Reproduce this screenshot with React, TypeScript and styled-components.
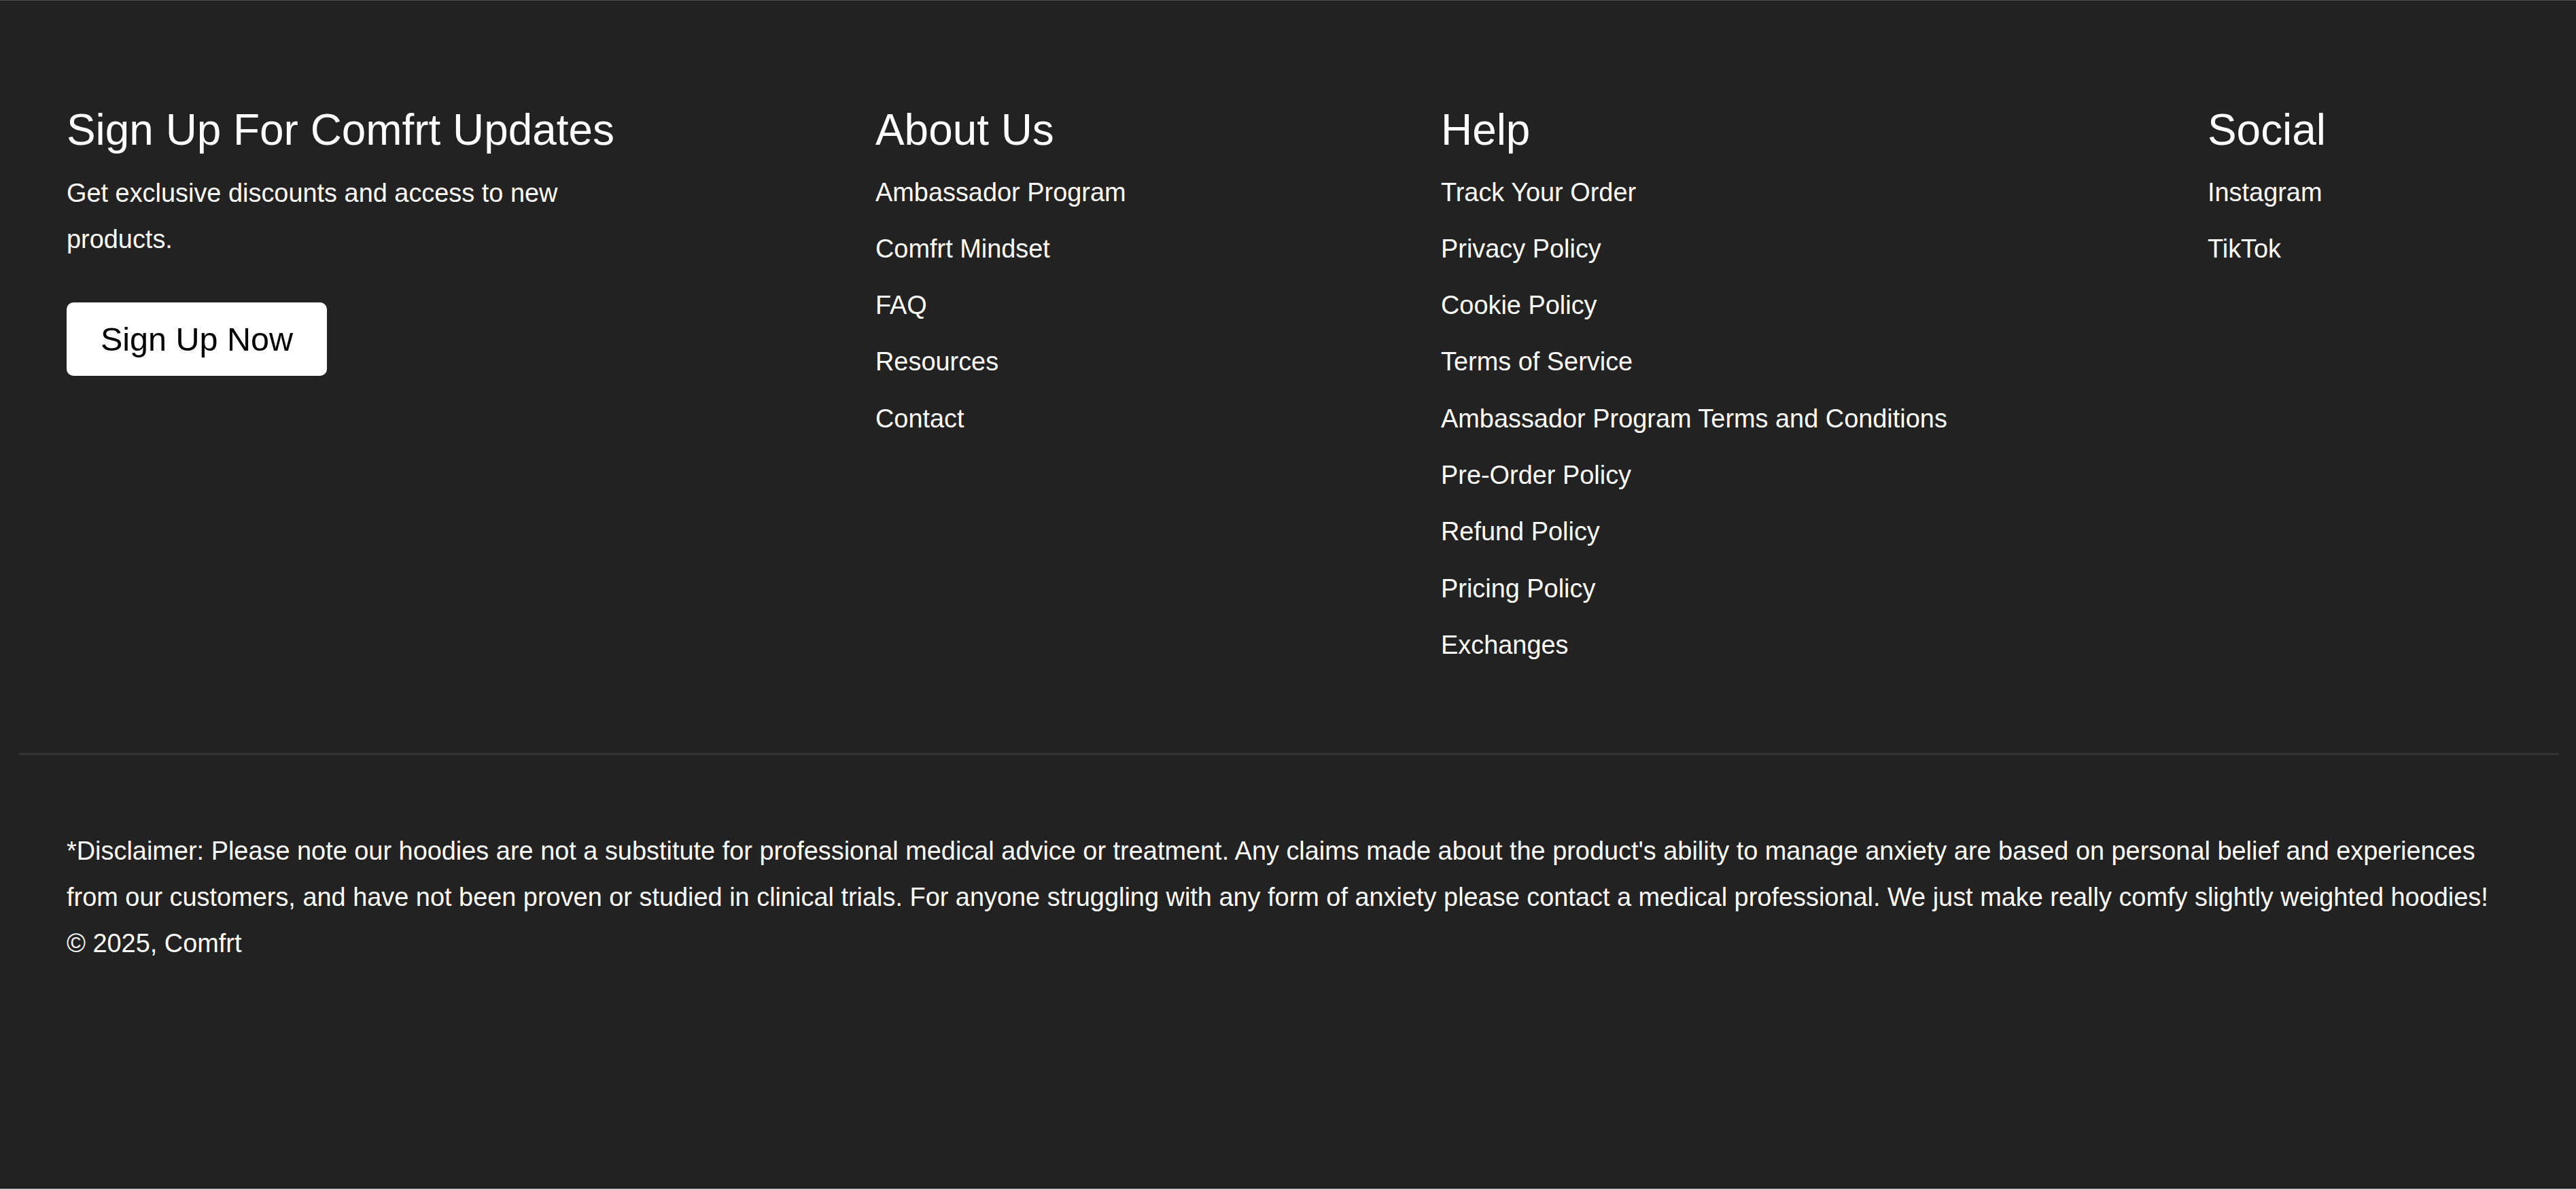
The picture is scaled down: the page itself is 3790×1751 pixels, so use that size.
import React from "react";
import styled, { createGlobalStyle } from "styled-components";

const GlobalStyle = createGlobalStyle`
  html, body {
    margin: 0;
    padding: 0;
    background: #c9c9c9;
  }
  * { box-sizing: border-box; }
`;

const Footer = styled.footer`
  height: 1749px;
  background: #222222;
  color: #ffffff;
  font-family: "Liberation Sans", Arial, Helvetica, sans-serif;
  border-top: 1px solid #4b4b4b;
  border-bottom: 1px solid #111111;
  padding-top: 149px;
`;

const TopGrid = styled.div`
  display: grid;
  grid-template-columns: 1190px 832px 1128px 1fr;
  padding: 0 98px;
  align-items: start;
`;

const Column = styled.div`
  display: flex;
  flex-direction: column;
`;

const Heading = styled.h2`
  margin: 0;
  font-size: 63.9px;
  font-weight: 400;
  line-height: 82.5px;
  white-space: nowrap;
`;

const Intro = styled.p`
  margin: 17px 0 0;
  max-width: 800px;
  font-size: 37.9px;
  line-height: 68.5px;
`;

const SignUpButton = styled.a`
  display: inline-flex;
  align-self: flex-start;
  align-items: center;
  justify-content: center;
  height: 108px;
  padding: 0 50px;
  margin-top: 58px;
  background: #ffffff;
  color: #000000;
  font-size: 48.5px;
  border-radius: 10px;
  text-decoration: none;
  cursor: pointer;
`;

const LinkList = styled.ul`
  list-style: none;
  margin: 16px 0 0;
  padding: 0;
  display: flex;
  flex-direction: column;
  gap: 15.3px;
`;

const LinkItem = styled.li`
  font-size: 37.9px;
  line-height: 68px;
  white-space: nowrap;
`;

const FooterLink = styled.a`
  color: #ffffff;
  text-decoration: none;
`;

const Divider = styled.hr`
  margin: 125px 25px 0 28px;
  border: none;
  height: 3px;
  background: #333333;
`;

const Bottom = styled.div`
  padding: 107px 98px 0;
  font-size: 37.9px;
  line-height: 68px;
`;

const Disclaimer = styled.p`
  margin: 0;
`;

const Copyright = styled.p`
  margin: 0;
`;

const aboutLinks = ["Ambassador Program", "Comfrt Mindset", "FAQ", "Resources", "Contact"];
const helpLinks = [
  "Track Your Order",
  "Privacy Policy",
  "Cookie Policy",
  "Terms of Service",
  "Ambassador Program Terms and Conditions",
  "Pre-Order Policy",
  "Refund Policy",
  "Pricing Policy",
  "Exchanges",
];
const socialLinks = ["Instagram", "TikTok"];

const LinkColumn: React.FC<{ title: string; links: string[] }> = ({ title, links }) => (
  <Column>
    <Heading>{title}</Heading>
    <LinkList>
      {links.map((l) => (
        <LinkItem key={l}>
          <FooterLink href="#">{l}</FooterLink>
        </LinkItem>
      ))}
    </LinkList>
  </Column>
);

export default function App() {
  return (
    <>
      <GlobalStyle />
      <Footer>
        <TopGrid>
          <Column>
            <Heading>Sign Up For Comfrt Updates</Heading>
            <Intro>Get exclusive discounts and access to new products.</Intro>
            <SignUpButton href="#">Sign Up Now</SignUpButton>
          </Column>
          <LinkColumn title="About Us" links={aboutLinks} />
          <LinkColumn title="Help" links={helpLinks} />
          <LinkColumn title="Social" links={socialLinks} />
        </TopGrid>
        <Divider />
        <Bottom>
          <Disclaimer>
            *Disclaimer: Please note our hoodies are not a substitute for professional medical advice or
            treatment. Any claims made about the product's ability to manage anxiety are based on personal
            belief and experiences from our customers, and have not been proven or studied in clinical
            trials. For anyone struggling with any form of anxiety please contact a medical professional.
            We just make really comfy slightly weighted hoodies!
          </Disclaimer>
          <Copyright>© 2025, Comfrt</Copyright>
        </Bottom>
      </Footer>
    </>
  );
}
